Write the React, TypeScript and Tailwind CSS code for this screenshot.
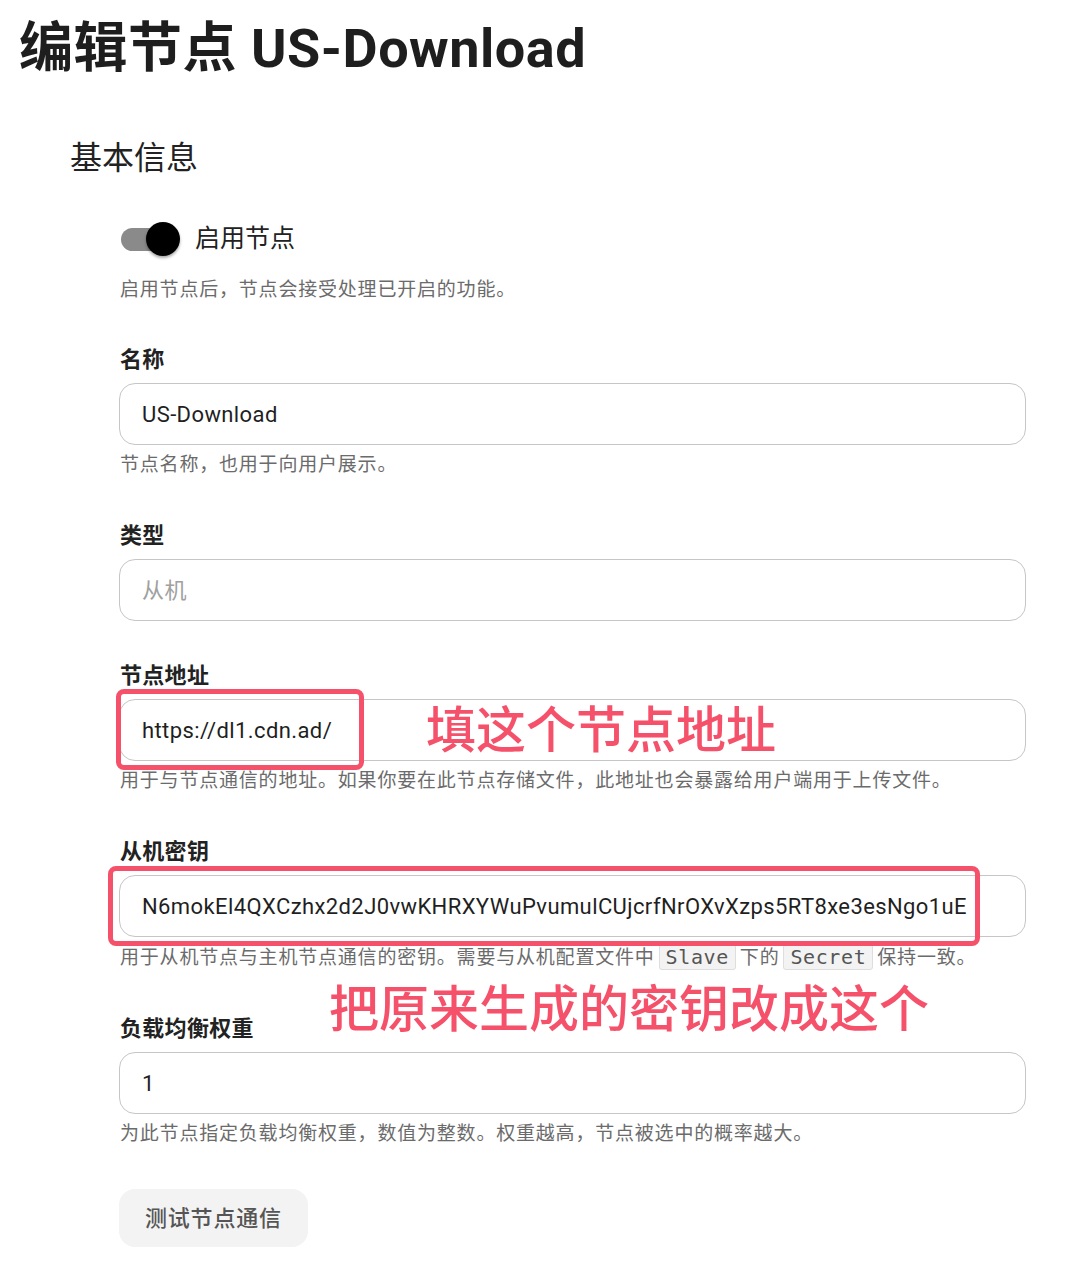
import React from "react";

const font = { fontFamily: "Roboto, 'Noto Sans CJK SC', sans-serif" };

function Field({
  label,
  value,
  muted,
  helper,
}: {
  label: string;
  value: string;
  muted?: boolean;
  helper?: React.ReactNode;
}) {
  return (
    <div className="flex flex-col">
      <label className="pl-px text-[22px] leading-[30px] font-semibold text-[#222] tracking-[0.3px]">{label}</label>
      <div className="mt-2 h-[62px] rounded-2xl border border-[#c6c6c6] px-[22px] flex items-center overflow-hidden">
        <span
          className={
            "text-[22px] tracking-[0.4px] whitespace-nowrap " +
            (muted ? "text-[#a0a0a0]" : "text-[#1f1f1f]")
          }
        >
          {value}
        </span>
      </div>
      {helper && (
        <p className="pl-px mt-[6px] text-[19px] leading-[28px] tracking-[0.8px] text-[#6b6b6b]">{helper}</p>
      )}
    </div>
  );
}

function Code({ children }: { children: string }) {
  return (
    <code className="mx-1 px-[6px] rounded-[3px] border border-[#dedede] bg-[#f3f3f3] text-[20px] tracking-[0.6px] text-[#555] font-['DejaVu_Sans_Mono',monospace]">
      {children}
    </code>
  );
}

export default function App() {
  return (
    <div className="relative bg-white min-h-[1274px] w-[1088px]" style={font}>
      <h1 className="pt-[18px] pl-[19px] text-[54px] leading-[62px] font-bold tracking-[0.5px] text-[#1e1e1e]">
        编辑节点 US-Download
      </h1>

      <section className="mt-[58px] pl-[70px] pr-[62px]">
        <h2 className="text-[32px] leading-[40px] text-[#222]">基本信息</h2>

        <div className="pl-[49px] mt-[44px] flex flex-col">
          {/* enable switch */}
          <div className="flex items-center h-[34px]">
            <div className="relative w-[61px] h-[34px] flex items-center">
              <div className="ml-[2px] w-[54px] h-[23px] rounded-full bg-[#8a8a8a]" />
              <div className="absolute right-0 top-0 w-[34px] h-[34px] rounded-full bg-black shadow-[0_2px_3px_rgba(0,0,0,0.35)]" />
            </div>
            <span className="ml-[15px] text-[25px] text-[#222]">启用节点</span>
          </div>
          <p className="pl-px mt-[20px] text-[19px] leading-[28px] tracking-[0.8px] text-[#6b6b6b]">
            启用节点后，节点会接受处理已开启的功能。
          </p>

          <div className="mt-[41px] flex flex-col gap-[42px]">
            <Field label="名称" value="US-Download" helper="节点名称，也用于向用户展示。" />
            <div className="-mb-[2px]">
              <Field label="类型" value="从机" muted />
            </div>
            <Field
              label="节点地址"
              value="https://dl1.cdn.ad/"
              helper="用于与节点通信的地址。如果你要在此节点存储文件，此地址也会暴露给用户端用于上传文件。"
            />
            <Field
              label="从机密钥"
              value="N6mokEl4QXCzhx2d2J0vwKHRXYWuPvumulCUjcrfNrOXvXzps5RT8xe3esNgo1uE"
              helper={
                <>
                  用于从机节点与主机节点通信的密钥。需要与从机配置文件中
                  <Code>Slave</Code>下的<Code>Secret</Code>保持一致。
                </>
              }
            />
            <Field
              label="负载均衡权重"
              value="1"
              helper="为此节点指定负载均衡权重，数值为整数。权重越高，节点被选中的概率越大。"
            />
          </div>

          <div className="mt-[41px]">
            <button className="h-[58px] px-[26px] rounded-2xl bg-[#f3f3f3] text-[22px] font-medium tracking-[0.8px] text-[#555]">
              测试节点通信
            </button>
          </div>
        </div>
      </section>

      {/* annotations */}
      <div className="absolute left-[116px] top-[689px] w-[248px] h-[81px] border-[5px] border-[#f5516a] rounded-lg" />
      <div className="absolute left-[426px] top-[702px] text-[50px] leading-[58px] font-medium text-[#f5516a]">
        填这个节点地址
      </div>
      <div className="absolute left-[108px] top-[866px] w-[872px] h-[80px] border-[5px] border-[#f5516a] rounded-lg" />
      <div className="absolute left-[329px] top-[981px] text-[50px] leading-[58px] font-medium text-[#f5516a]">
        把原来生成的密钥改成这个
      </div>
    </div>
  );
}
